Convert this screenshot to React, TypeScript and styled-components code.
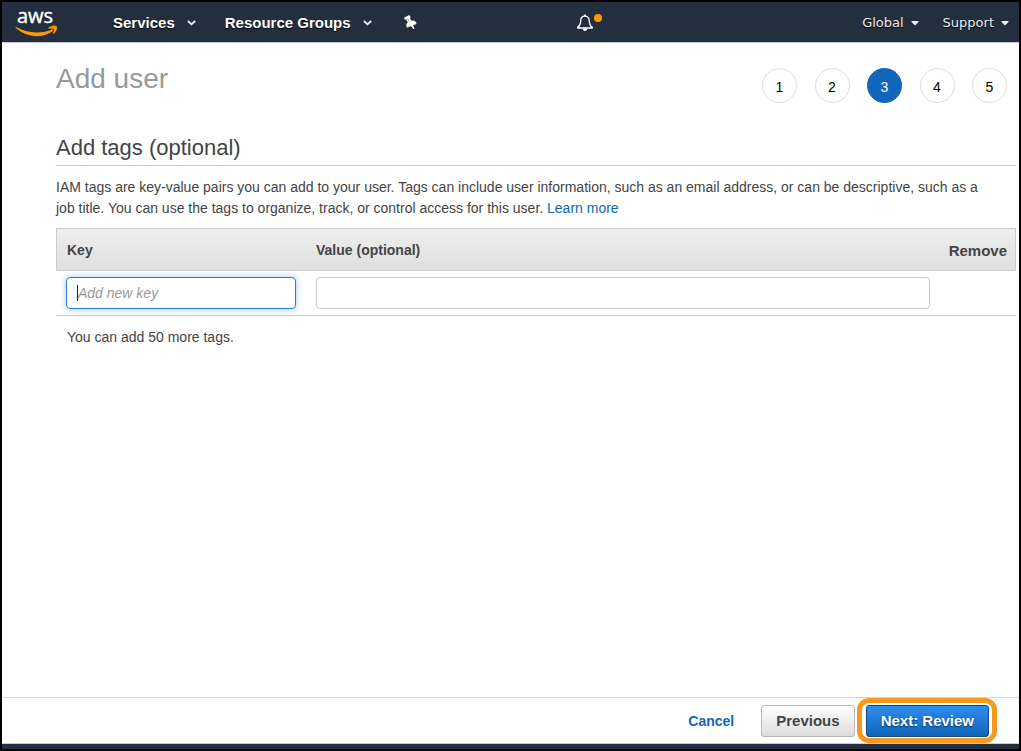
import React from "react";
import styled, { createGlobalStyle, css } from "styled-components";

const GlobalStyle = createGlobalStyle`
  *, *::before, *::after { box-sizing: border-box; }
  body {
    margin: 0;
    background: #fff;
    color: #444;
    font: 14px/21px "Liberation Sans", Arial, sans-serif;
  }
  button, input { font-family: inherit; }
`;

const Page = styled.div`
  display: flex;
  flex-direction: column;
  min-height: 100vh;
  border: 2px solid #000;
`;

const TopBar = styled.header`
  display: flex;
  align-items: center;
  height: 41px;
  padding: 2px 10px 0 13px;
  background: #232f3e;
  border-bottom: 1px solid #c5c9ce;
`;

const LogoLink = styled.a`
  display: flex;
  margin-right: 54px;
`;

const Menus = styled.nav`
  display: flex;
  align-items: center;
  gap: 29px;
`;

const MenuButton = styled.button<{ $small?: boolean }>`
  display: flex;
  align-items: center;
  gap: 12px;
  padding: 0;
  border: 0;
  background: none;
  color: #fff;
  font-size: 15px;
  line-height: 20px;
  font-weight: bold;
  text-shadow: 0 1px 1px #000;
  ${(p) =>
    p.$small &&
    css`
      gap: 7px;
      color: #eee;
      font-family: "DejaVu Sans", Verdana, sans-serif;
      font-size: 13px;
      font-weight: normal;
    `}
`;

const IconButton = styled.button`
  display: flex;
  padding: 0;
  border: 0;
  background: none;
`;

const PinButton = styled(IconButton)`
  margin-left: 2px;
`;

const BellButton = styled(IconButton)`
  margin-left: 159px;
`;

const AccountMenus = styled(Menus)`
  gap: 24px;
  margin-left: auto;
`;

const Main = styled.main`
  flex: 1;
  padding: 20px 3px 20px 54px;
`;

const TitleRow = styled.div`
  display: flex;
  justify-content: space-between;
  align-items: flex-start;
  padding-right: 9px;
`;

const Title = styled.h1`
  margin: 0;
  color: #999;
  font-size: 28px;
  line-height: 32px;
  font-weight: normal;
`;

const Steps = styled.ol`
  display: flex;
  justify-content: space-between;
  width: 245px;
  margin: 5px 0 0;
  padding: 0;
  list-style: none;
`;

const Step = styled.li<{ $current?: boolean }>`
  width: 35px;
  height: 35px;
  padding-top: 2px;
  border: 1px solid ${(p) => (p.$current ? "#1166bb" : "#ddd")};
  border-radius: 50%;
  background: ${(p) => (p.$current ? "#1166bb" : "#fff")};
  color: ${(p) => (p.$current ? "#fff" : "#000")};
  font-size: 14px;
  line-height: 33px;
  text-align: center;
`;

const SectionTitle = styled.h2`
  margin: 30px 0 11px;
  padding-bottom: 2px;
  border-bottom: 1px solid #ccc;
  font-size: 22px;
  line-height: 30px;
  font-weight: normal;
`;

const Intro = styled.p`
  margin: 0 0 9px;
  padding-right: 20px;
`;

const Link = styled.a`
  color: #1166bb;
  text-decoration: none;
`;

const TagTable = styled.table`
  width: 100%;
  table-layout: fixed;
  border-collapse: separate;
  border-spacing: 0;
`;

const HeadCell = styled.th<{ $width?: number; $end?: boolean }>`
  width: ${(p) => (p.$width ? `${p.$width}px` : "auto")};
  height: 43px;
  padding: 1px ${(p) => (p.$end ? 8 : 10)}px 0;
  border: 1px solid #ccc;
  border-width: 1px 0;
  background: linear-gradient(#eee, #dfdfdf);
  font-size: ${(p) => (p.$end ? 15 : 14)}px;
  text-align: ${(p) => (p.$end ? "right" : "left")};
  &:first-child { border-left-width: 1px; }
  &:last-child { border-right-width: 1px; }
`;

const Cell = styled.td`
  padding: 6px 10px;
  border-bottom: 1px solid #ccc;
`;

const TextInput = styled.input<{ $active?: boolean }>`
  display: block;
  width: 100%;
  height: 32px;
  padding: 0 11px;
  border: 1px solid #ccc;
  border-radius: 4px;
  outline: none;
  background: #fff;
  font-size: 14px;
  &::placeholder { color: #999; font-style: italic; }
  ${(p) =>
    p.$active &&
    css`
      border-color: #2a80d8;
      box-shadow: 0 0 6px rgba(42, 128, 216, 0.45);
      background: linear-gradient(#222, #222) 10px center / 1px 16px no-repeat #fff;
      caret-color: transparent;
    `}
`;

const Remaining = styled.p`
  margin: 11px;
`;

const ActionBar = styled.footer`
  display: flex;
  align-items: center;
  justify-content: flex-end;
  gap: 11px;
  height: 47px;
  padding-right: 30px;
  border-top: 1px solid #d5d5d5;
  border-bottom: 1px solid #ccc;
`;

const BottomStrip = styled.div`
  height: 5px;
  background: #232f3e;
`;

const CancelLink = styled(Link)`
  margin-right: 16px;
  font-size: 14px;
  line-height: 22px;
  font-weight: bold;
`;

const Button = styled.button<{ $primary?: boolean }>`
  height: 32px;
  padding: 0 14px;
  border: 1px solid #b8b8b8;
  border-radius: 3px;
  background: linear-gradient(#fff, #ddd);
  color: #444;
  font-size: 15px;
  font-weight: bold;
  ${(p) =>
    p.$primary &&
    css`
      border-color: #0a4a8c;
      background: linear-gradient(#2e8ded, #1166bb);
      color: #fff;
      text-shadow: 0 1px 2px #063462;
    `}
`;

const Highlight = styled.div`
  position: relative;
  &::after {
    content: "";
    position: absolute;
    inset: -7px -8px -6px -9px;
    border: 5px solid #f8981d;
    border-radius: 12px;
    pointer-events: none;
  }
`;

const Logo = () => (
  <svg width="44" height="30" viewBox="0 0 44 30" overflow="visible" role="img" aria-label="aws">
    <text
      x="2"
      y="15"
      fill="#fff"
      stroke="#fff"
      strokeWidth="0.400"
      fontFamily="Open Sans, Noto Sans, sans-serif"
      fontSize="20"
    >
      aws
    </text>
    <path d="M.8 18.800C12 25.600 26.500 26.200 37.300 21.200l1 1.500C27.200 31 11 29.800.4 19.600z" fill="#f90" />
    <path
      d="M33.800 19.600c2.300-1.700 7-2.200 7.700-1.200.8 1-.3 5.100-2.500 6.900-.5.300-.8.100-.6-.4.600-1.500 1.300-3.300.9-4-.5-.6-2.900-.8-4.900-.6-.7.100-1-.2-.6-.7z"
      fill="#f90"
      stroke="#f90"
      strokeWidth="0.700"
    />
  </svg>
);

const Chevron = () => (
  <svg width="9" height="6" viewBox="0 0 9 6" aria-hidden="true">
    <path d="M.8 1l3.700 3.200L8.200 1" fill="none" stroke="#eee" strokeWidth="1.800" />
  </svg>
);

const Triangle = () => (
  <svg width="8" height="5" viewBox="0 0 8 5" aria-hidden="true">
    <path d="M0.500 0h7v1L4 4.500.500 1z" fill="#eee" />
  </svg>
);

const Pin = () => (
  <svg width="14" height="16" viewBox="0 0 14 16" aria-hidden="true">
    <path
      d="M1 2.800L6.200 0l1.500 1.900-.8 1.200 1.400 2.700 2.300-.2 2.500 1.500.3 1.900-3.300 1.200 1.500 3.600-1.200.2-2.500-3L4.400 12.800l-1.200-1.700.4-2.300 1.200-1.200-1.500-3L1.800 4.800z"
      fill="#fff"
    />
    <path d="M4.700 3.700l1.600 3" stroke="#8b929a" strokeWidth="1" />
  </svg>
);

const Bell = () => (
  <svg width="28" height="20" viewBox="0 0 28 20" aria-hidden="true">
    <path
      d="M9 3.200C6 3.200 4.700 5.300 4.700 8c0 3.500-1 5-3 6.400v.6h14.600v-.6c-2-1.400-3-2.900-3-6.400C13.300 5.300 12 3.200 9 3.200z"
      fill="none"
      stroke="#fff"
      strokeWidth="1.300"
      strokeLinejoin="round"
    />
    <path d="M9 1.400v2" stroke="#fff" strokeWidth="1.800" />
    <path d="M6.800 15.500h4.400c0 1.600-.9 2.500-2.200 2.500s-2.200-.9-2.200-2.500z" fill="#fff" />
    <circle cx="22" cy="5" r="4" fill="#f90" />
  </svg>
);

export default function App() {
  return (
    <Page>
      <GlobalStyle />
      <TopBar>
        <LogoLink href="#home">
          <Logo />
        </LogoLink>
        <Menus aria-label="Main">
          <MenuButton type="button">Services <Chevron /></MenuButton>
          <MenuButton type="button">Resource Groups <Chevron /></MenuButton>
          <PinButton type="button" aria-label="Pin shortcuts"><Pin /></PinButton>
        </Menus>
        <BellButton type="button" aria-label="Notifications"><Bell /></BellButton>
        <AccountMenus aria-label="Account">
          <MenuButton type="button" $small>Global <Triangle /></MenuButton>
          <MenuButton type="button" $small>Support <Triangle /></MenuButton>
        </AccountMenus>
      </TopBar>
      <Main>
        <TitleRow>
          <Title>Add user</Title>
          <Steps>
            {[1, 2, 3, 4, 5].map((n) => (
              <Step key={n} $current={n === 3} aria-current={n === 3 ? "step" : undefined}>
                {n}
              </Step>
            ))}
          </Steps>
        </TitleRow>
        <SectionTitle>Add tags (optional)</SectionTitle>
        <Intro>
          IAM tags are key-value pairs you can add to your user. Tags can include user information, such as an email
          address, or can be descriptive, such as a job title. You can use the tags to organize, track, or control
          access for this user. <Link href="#learn-more">Learn more</Link>
        </Intro>
        <TagTable>
          <thead>
            <tr>
              <HeadCell $width={250} id="key">Key</HeadCell>
              <HeadCell id="value">Value (optional)</HeadCell>
              <HeadCell $width={76} $end>Remove</HeadCell>
            </tr>
          </thead>
          <tbody>
            <tr>
              <Cell><TextInput $active aria-labelledby="key" placeholder="Add new key" /></Cell>
              <Cell><TextInput aria-labelledby="value" /></Cell>
              <Cell />
            </tr>
          </tbody>
        </TagTable>
        <Remaining>You can add 50 more tags.</Remaining>
      </Main>
      <ActionBar>
        <CancelLink href="#cancel">Cancel</CancelLink>
        <Button type="button">Previous</Button>
        <Highlight>
          <Button type="button" $primary>Next: Review</Button>
        </Highlight>
      </ActionBar>
      <BottomStrip />
    </Page>
  );
}
